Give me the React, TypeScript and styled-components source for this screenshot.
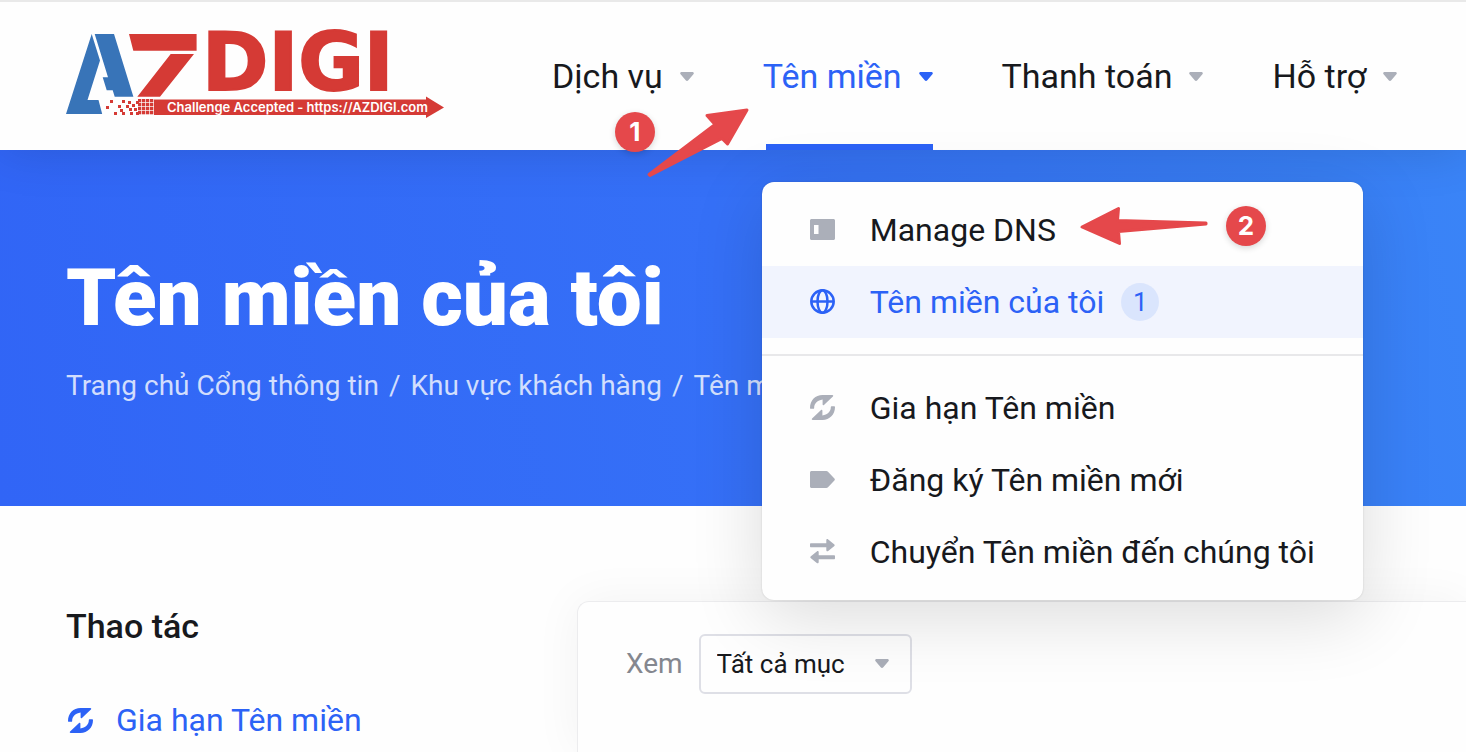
import React from "react";
import styled, { createGlobalStyle } from "styled-components";

const GlobalStyle = createGlobalStyle`
  *, *::before, *::after { box-sizing: border-box; }
  body {
    margin: 0;
    background: #fefefe;
    color: #17191d;
    font-family: Roboto, "Liberation Sans", sans-serif;
    overflow-x: hidden;
  }
  a { color: inherit; text-decoration: none; }
  ul, ol { margin: 0; padding: 0; list-style: none; }
  svg { display: block; flex: none; }
`;

const BLUE = "#2c62f6";
const RED = "#e5484b";
const MUTED = "#abafb9";

const Page = styled.div`
  min-height: 100vh;
  display: flex;
  flex-direction: column;
  overflow: hidden;
`;

const Header = styled.header`
  position: relative;
  z-index: 2;
  display: flex;
  align-items: stretch;
  gap: 108px;
  height: 150px;
  padding: 0 66px;
  border-top: 2px solid #e9e9e9;
  background: #fefefe;
  box-shadow: 0 0 48px rgba(0, 0, 0, 0.14);
`;

const LogoLink = styled.a`
  display: flex;
  align-items: center;

  svg { overflow: visible; }
`;

const Nav = styled.nav`
  display: flex;
`;

const NavList = styled.ul`
  display: flex;
  gap: 69px;
`;

const NavItem = styled.li`
  position: relative;
  display: flex;
`;

const NavButton = styled.button<{ $active?: boolean }>`
  display: flex;
  align-items: center;
  gap: 17px;
  padding: 0;
  border: 0;
  background: none;
  color: ${(p) => (p.$active ? BLUE : "#17191d")};
  font: 400 34px/40px Roboto, "Liberation Sans", sans-serif;
  white-space: nowrap;
  cursor: pointer;

  svg { color: ${(p) => (p.$active ? BLUE : MUTED)}; }

  &::after {
    content: "";
    position: absolute;
    left: 3px;
    right: 0;
    bottom: 0;
    height: 6px;
    background: ${(p) => (p.$active ? BLUE : "transparent")};
  }
`;

const Dropdown = styled.div`
  position: absolute;
  top: 180px;
  left: -1px;
  width: 601px;
  padding: 12px 0;
  border-radius: 12px;
  background: #fefefe;
  box-shadow: 0 0 2px rgba(0, 0, 0, 0.16), 0 16px 72px rgba(0, 0, 0, 0.14);
`;

const MenuLink = styled.a<{ $active?: boolean }>`
  display: flex;
  align-items: center;
  height: 72px;
  padding: 0 48px;
  background: ${(p) => (p.$active ? "#f1f4fe" : "transparent")};
  color: ${(p) => (p.$active ? BLUE : "#17191d")};
  font-size: 32px;
  line-height: 40px;
  white-space: nowrap;
`;

const MenuIcon = styled.span<{ $active?: boolean }>`
  flex: none;
  width: 60px;
  padding-bottom: 2px;
  color: ${(p) => (p.$active ? BLUE : MUTED)};
`;

const Divider = styled.hr`
  height: 2px;
  margin: 16px 0;
  border: 0;
  background: #e8e8ea;
`;

const Count = styled.span`
  display: grid;
  place-items: center;
  width: 38px;
  height: 38px;
  margin-left: 17px;
  border-radius: 50%;
  background: #dae5fd;
  font-size: 26px;
  line-height: 38px;
`;

const StepBadge = styled.span`
  display: grid;
  place-items: center;
  width: 40px;
  height: 40px;
  border-radius: 50%;
  background: ${RED};
  color: #fff;
  font: 700 26px/40px Inter, "Open Sans", sans-serif;
  box-shadow: 0 2px 6px rgba(0, 0, 0, 0.16);
`;

const StepPointer = styled.span`
  display: flex;
  align-items: center;
  gap: 18px;
  margin: 0 0 8px 24px;
`;

const StepOverlay = styled.div`
  position: absolute;
  top: 104px;
  right: 100%;
  margin-right: 13px;
  display: flex;
  align-items: flex-start;
  pointer-events: none;

  ${StepBadge} { margin: 6px -9px 0 0; }
`;

const Hero = styled.section`
  padding: 100px 66px;
  background: linear-gradient(80deg, #3165f6 0%, #3570f7 50%, #3a84f7 100%);
  color: #fff;
`;

const Title = styled.h1`
  margin: 0;
  font-size: 80px;
  font-weight: 900;
  line-height: 96px;
`;

const Crumbs = styled.ol`
  display: flex;
  margin-top: 20px;
  color: rgba(255, 255, 255, 0.78);
  font-size: 28px;
  line-height: 40px;
  white-space: nowrap;

  li + li::before { content: "/"; padding: 0 10px; }
`;

const Main = styled.main`
  flex: 1;
  display: grid;
  grid-template-columns: 446px minmax(0, 1fr);
  gap: 65px;
  padding: 95px 0 0 66px;
`;

const Sidebar = styled.aside`
  padding-top: 5px;
`;

const SideTitle = styled.h2`
  margin: 0 0 54px;
  font-size: 34px;
  font-weight: 500;
  line-height: 40px;
`;

const SideLink = styled.a`
  display: flex;
  align-items: center;
  gap: 23px;
  padding-left: 2px;
  color: ${BLUE};
  font-size: 32px;
  line-height: 40px;
`;

const Card = styled.section`
  padding: 32px 48px;
  border: 1px solid #ececee;
  border-width: 1px 0 0 1px;
  border-radius: 12px 0 0 0;
  background: #fefefe;
  box-shadow: 0 0 48px rgba(0, 0, 0, 0.05);
`;

const Filter = styled.div`
  display: flex;
  align-items: center;
  gap: 16px;

  label { color: #84878f; font-size: 28px; line-height: 40px; }
`;

const SelectWrap = styled.div`
  position: relative;
  width: 213px;

  svg {
    position: absolute;
    right: 23px;
    top: 25px;
    color: ${MUTED};
    pointer-events: none;
  }
`;

const Select = styled.select`
  appearance: none;
  width: 100%;
  height: 60px;
  padding: 0 48px 0 16px;
  border: 2px solid #dedfe6;
  border-radius: 6px;
  background: transparent;
  color: #17191d;
  font: 400 26px/40px Roboto, "Liberation Sans", sans-serif;
`;

const Caret = () => (
  <svg width="14" height="9" viewBox="0 0 14 9" fill="currentColor" aria-hidden="true">
    <path d="M1.6 0h10.8c1.3 0 1.9 1.3 1 2.3L8.3 8.3c-.7.8-1.9.8-2.6 0L.6 2.3C-.3 1.3.3 0 1.6 0z" />
  </svg>
);

const RenewIcon = () => (
  <svg width="25" height="25" viewBox="0 0 24 24" fill="currentColor" aria-hidden="true">
    <path d="M0 12.4C0 5 5.2 0 12 0h9.4c.9 0 1.200.8.6 1.400l-8.600 8.300c-.5.5-1.300.2-1.300-.5V4.300C7.300 5 4 8 4 12.400c0 .5-.4.900-.9.900H.9c-.5 0-.9-.4-.9-.9z" />
    <path d="M24 11.600C24 19 18.800 24 12 24H2.600c-.9 0-1.200-.8-.6-1.400l8.600-8.300c.5-.5 1.300-.2 1.300.5v4.900c4.800-.7 8.100-3.700 8.100-8.100 0-.5.400-.9.900-.9h2.200c.5 0 .9.400.9.900z" />
  </svg>
);

const DnsIcon = () => (
  <svg width="25" height="21" viewBox="0 0 25 21" fill="currentColor" aria-hidden="true">
    <path fillRule="evenodd" d="M1.500 0h22c.8 0 1.500.7 1.500 1.500v18c0 .8-.7 1.500-1.500 1.500h-22C.7 21 0 20.300 0 19.500v-18C0 .7.7 0 1.500 0zM4 6v9h4.500V6z" />
  </svg>
);

const GlobeIcon = () => (
  <svg width="25" height="25" viewBox="0 0 25 25" fill="none" stroke="currentColor" strokeWidth="2.500" aria-hidden="true">
    <circle cx="12.500" cy="12.500" r="11.200" />
    <ellipse cx="12.500" cy="12.500" rx="5" ry="11.200" />
    <path d="M1.500 12.500h22" />
  </svg>
);

const TagIcon = () => (
  <svg width="25" height="17" viewBox="0 0 25 17" fill="currentColor" aria-hidden="true">
    <path d="M1.500 0h14.800c.7 0 1.300.3 1.700.8l6.400 6.700c.6.600.6 1.400 0 2L18 16.200c-.4.500-1 .8-1.700.8H1.500C.7 17 0 16.300 0 15.500v-14C0 .7.700 0 1.500 0z" />
  </svg>
);

const TransferIcon = () => (
  <svg width="25" height="25" viewBox="0 0 25 25" fill="currentColor" aria-hidden="true">
    <path d="M1 4.300h15.300V1.400c0-1.200 1-1.700 1.900-.9l5.900 4.700c.8.600.8 1.400 0 2l-5.900 4.700c-.9.800-1.900.3-1.900-.9V8.300H1c-.6 0-1-.4-1-1v-2c0-.6.400-1 1-1z" />
    <path d="M24 16.300H8.700v-2.900c0-1.200-1-1.700-1.900-.9L.9 17.200c-.8.600-.8 1.400 0 2l5.900 4.700c.9.800 1.900.3 1.900-.9v-2.700H24c.6 0 1-.4 1-1v-2c0-.6-.4-1-1-1z" />
  </svg>
);

const ArrowUp = () => (
  <svg width="104" height="72" viewBox="0 0 104 72" fill={RED} stroke={RED} strokeWidth="3" strokeLinejoin="round" aria-hidden="true">
    <path d="M101 4 61 9.500l8 9L3 68.500l1 1 72-37L81.500 38z" />
  </svg>
);

const ArrowLeft = () => (
  <svg width="128" height="40" viewBox="0 0 128 40" fill={RED} stroke={RED} strokeWidth="3" strokeLinejoin="round" aria-hidden="true">
    <path d="M2 21 38.500 2.500 37.500 14.500 126 17v1L38.500 25.500 39.500 37.500z" />
  </svg>
);

const pixels = [
  [110, 100], [122, 100], [128, 101], [106, 106], [118, 105], [126, 105], [132, 104], [136, 101], [120, 109],
  [129, 108], [134, 108], [114, 112], [122, 112], [130, 112], [136, 112], [155, 106],
];

const gridCols = [138, 142, 146, 150];
const gridRows = [99, 103, 107, 111];

const Logo = () => (
  <svg width="378" height="84" viewBox="66 34 378 84" role="img" aria-label="AZDIGI">
    <g fill="#3874b8">
      <path d="M91.700 34 66 114h36.200l-3.700-14H87.500L100 60.600z" />
      <path d="M94.700 34H114l19.400 62.700h-18.700l-2-6.400h-6l-4-13h5.300z" />
    </g>
    <g fill="#d53a35">
      <path d="M129 34h67.600v16.700h-63.300zM170.700 54H194l-34 42.700h-22.700z" />
      <path d="M154 99.500h272v-3l18 11-18 10.500v-3H154z" />
      {pixels.map(([x, y]) => (
        <rect key={`${x}-${y}`} x={x} y={y} width="3" height="3" />
      ))}
      {gridCols.map((x) => gridRows.map((y) => (
        <rect key={`${x}-${y}`} x={x} y={y} width="3.300" height="3.300" />
      )))}
      <text x="202" y="90" fontFamily="DejaVu Sans, sans-serif" fontWeight="700" fontSize="80" stroke="#d53a35" strokeWidth="2">
        DIGI
      </text>
    </g>
    <text x="167" y="112" fill="#fff" fontFamily="Inter, sans-serif" fontWeight="600" fontSize="13">
      Challenge Accepted - https://AZDIGI.com
    </text>
  </svg>
);

type Entry = { label: string; icon: React.ReactNode; active?: boolean; count?: number; step?: number };

const menuTop: Entry[] = [
  { label: "Manage DNS", icon: <DnsIcon />, step: 2 },
  { label: "Tên miền của tôi", icon: <GlobeIcon />, active: true, count: 1 },
];

const menuBottom: Entry[] = [
  { label: "Gia hạn Tên miền", icon: <RenewIcon /> },
  { label: "Đăng ký Tên miền mới", icon: <TagIcon /> },
  { label: "Chuyển Tên miền đến chúng tôi", icon: <TransferIcon /> },
];

const MenuEntries = ({ entries }: { entries: Entry[] }) => (
  <ul>
    {entries.map((e) => (
      <li key={e.label}>
        <MenuLink href="#" $active={e.active}>
          <MenuIcon $active={e.active}>{e.icon}</MenuIcon>
          {e.label}
          {e.count && <Count>{e.count}</Count>}
          {e.step && (
            <StepPointer>
              <ArrowLeft />
              <StepBadge>{e.step}</StepBadge>
            </StepPointer>
          )}
        </MenuLink>
      </li>
    ))}
  </ul>
);

export default function App() {
  return (
    <Page>
      <GlobalStyle />
      <Header>
        <LogoLink href="#">
          <Logo />
        </LogoLink>
        <Nav>
          <NavList>
            <NavItem>
              <NavButton>Dịch vụ<Caret /></NavButton>
            </NavItem>
            <NavItem>
              <NavButton $active aria-expanded="true">Tên miền<Caret /></NavButton>
              <StepOverlay>
                <StepBadge>1</StepBadge>
                <ArrowUp />
              </StepOverlay>
              <Dropdown>
                <MenuEntries entries={menuTop} />
                <Divider />
                <MenuEntries entries={menuBottom} />
              </Dropdown>
            </NavItem>
            <NavItem>
              <NavButton>Thanh toán<Caret /></NavButton>
            </NavItem>
            <NavItem>
              <NavButton>Hỗ trợ<Caret /></NavButton>
            </NavItem>
          </NavList>
        </Nav>
      </Header>
      <Hero>
        <Title>Tên miền của tôi</Title>
        <Crumbs>
          <li><a href="#">Trang chủ Cổng thông tin</a></li>
          <li><a href="#">Khu vực khách hàng</a></li>
          <li>Tên miền của tôi</li>
        </Crumbs>
      </Hero>
      <Main>
        <Sidebar>
          <SideTitle>Thao tác</SideTitle>
          <SideLink href="#"><RenewIcon />Gia hạn Tên miền</SideLink>
        </Sidebar>
        <Card>
          <Filter>
            <label htmlFor="view">Xem</label>
            <SelectWrap>
              <Select id="view">
                <option>Tất cả mục</option>
              </Select>
              <Caret />
            </SelectWrap>
          </Filter>
        </Card>
      </Main>
    </Page>
  );
}
